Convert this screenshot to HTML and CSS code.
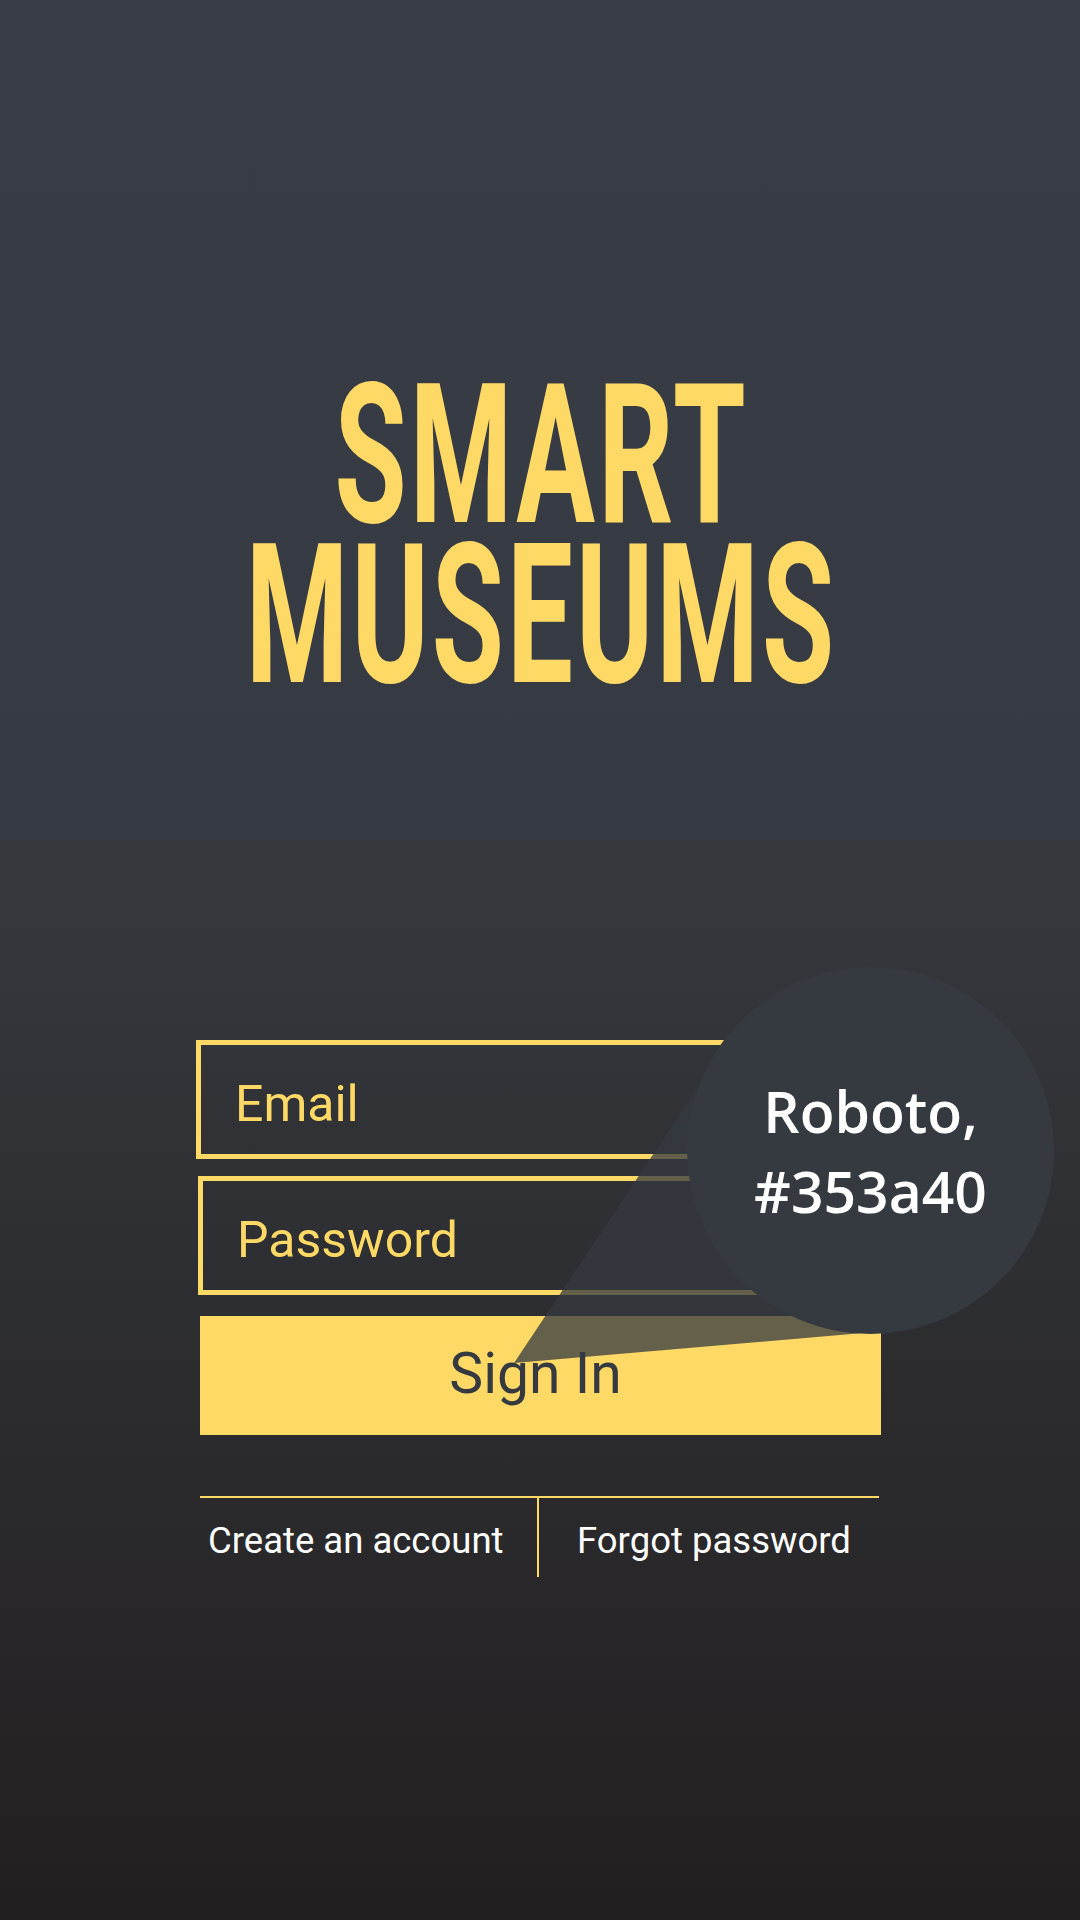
FILE: index.html
```html
<!DOCTYPE html>
<html lang="en">
<head>
<meta charset="utf-8">
<title>Smart Museums – Sign In</title>
<link rel="stylesheet" href="styles.css">
</head>
<body>
<div class="screen">
  <h1 class="title">
    <span class="title-line">SMART</span>
    <span class="title-line">MUSEUMS</span>
  </h1>
  <div class="form">
    <div class="field field-email">Email</div>
    <div class="field field-password">Password</div>
    <button class="signin" type="button">Sign In</button>
    <div class="links">
      <a class="link link-left">Create an account</a>
      <a class="link link-right">Forgot password</a>
    </div>
  </div>

  <svg class="callout-tail" width="1080" height="1920" viewBox="0 0 1080 1920" aria-hidden="true">
    <polygon points="514,1363 722,1051 870,1150 886,1331" fill="rgba(53,58,64,0.76)"/>
  </svg>
  <div class="callout">
    <span class="callout-text">Roboto,<br>#353a40</span>
  </div>
</div>
</body>
</html>
```

FILE: styles.css
```css
html, body {
  margin: 0;
  padding: 0;
}

body {
  width: 1080px;
  height: 1920px;
  overflow: hidden;
  font-family: Roboto, "Liberation Sans", sans-serif;
}

.screen {
  position: relative;
  width: 1080px;
  height: 1920px;
  box-sizing: border-box;
  padding-top: 376px;
  background: linear-gradient(to bottom,
    #383c44 0px,
    #363a42 840px,
    #35393e 841px,
    #231f20 1920px);
}

/* ---------- Title ---------- */
.title {
  margin: 0;
  font-family: Roboto, "Liberation Sans", sans-serif;
  font-weight: 700;
  font-size: 195.5px;
  line-height: 160px;
  color: #ffd966;
  text-align: center;
  letter-spacing: 5px;
  padding-left: 5px;
}

.title-line {
  display: block;
  transform: scaleX(0.6);
  transform-origin: 535px 0;
}

/* ---------- Form ---------- */
.form {
  display: flex;
  flex-direction: column;
  margin-top: 344px;
}

.field {
  box-sizing: border-box;
  height: 119px;
  border: 5px solid #ffd966;
  display: flex;
  align-items: center;
  padding-left: 34px;
  padding-top: 9px;
  font-size: 50px;
  line-height: 50px;
  color: #ffd966;
}

.field-email {
  margin-left: 196px;
  width: 686px;
}

.field-password {
  margin-left: 198px;
  width: 684px;
  margin-top: 17px;
}

.signin {
  box-sizing: border-box;
  margin: 21px 0 0 200px;
  width: 681px;
  height: 119px;
  border: none;
  padding: 0 10px 4px 0;
  background: #ffd966;
  color: #353a40;
  font-family: Roboto, "Liberation Sans", sans-serif;
  font-size: 57px;
  line-height: 57px;
  text-align: center;
}

.links {
  display: flex;
  margin: 61px 0 0 200px;
  width: 679px;
  border-top: 2px solid #ffd966;
}

.link {
  box-sizing: border-box;
  height: 79px;
  padding-top: 22px;
  font-size: 36.5px;
  line-height: 42px;
  color: #ffffff;
  white-space: nowrap;
}

.link-left {
  width: 339px;
  padding-left: 8px;
  border-right: 2px solid #ffd966;
}

.link-right {
  padding-left: 38px;
}

/* ---------- Annotation callout ---------- */
.callout-tail {
  position: absolute;
  left: 0;
  top: 0;
  pointer-events: none;
}

.callout {
  position: absolute;
  left: 687px;
  top: 967px;
  width: 367px;
  height: 367px;
  border-radius: 50%;
  background: #353a40;
  display: flex;
  align-items: center;
  justify-content: center;
}

.callout-text {
  font-family: "Open Sans", "Noto Sans", sans-serif;
  font-weight: 600;
  font-size: 57px;
  line-height: 80px;
  color: #ffffff;
  text-align: center;
}
```
